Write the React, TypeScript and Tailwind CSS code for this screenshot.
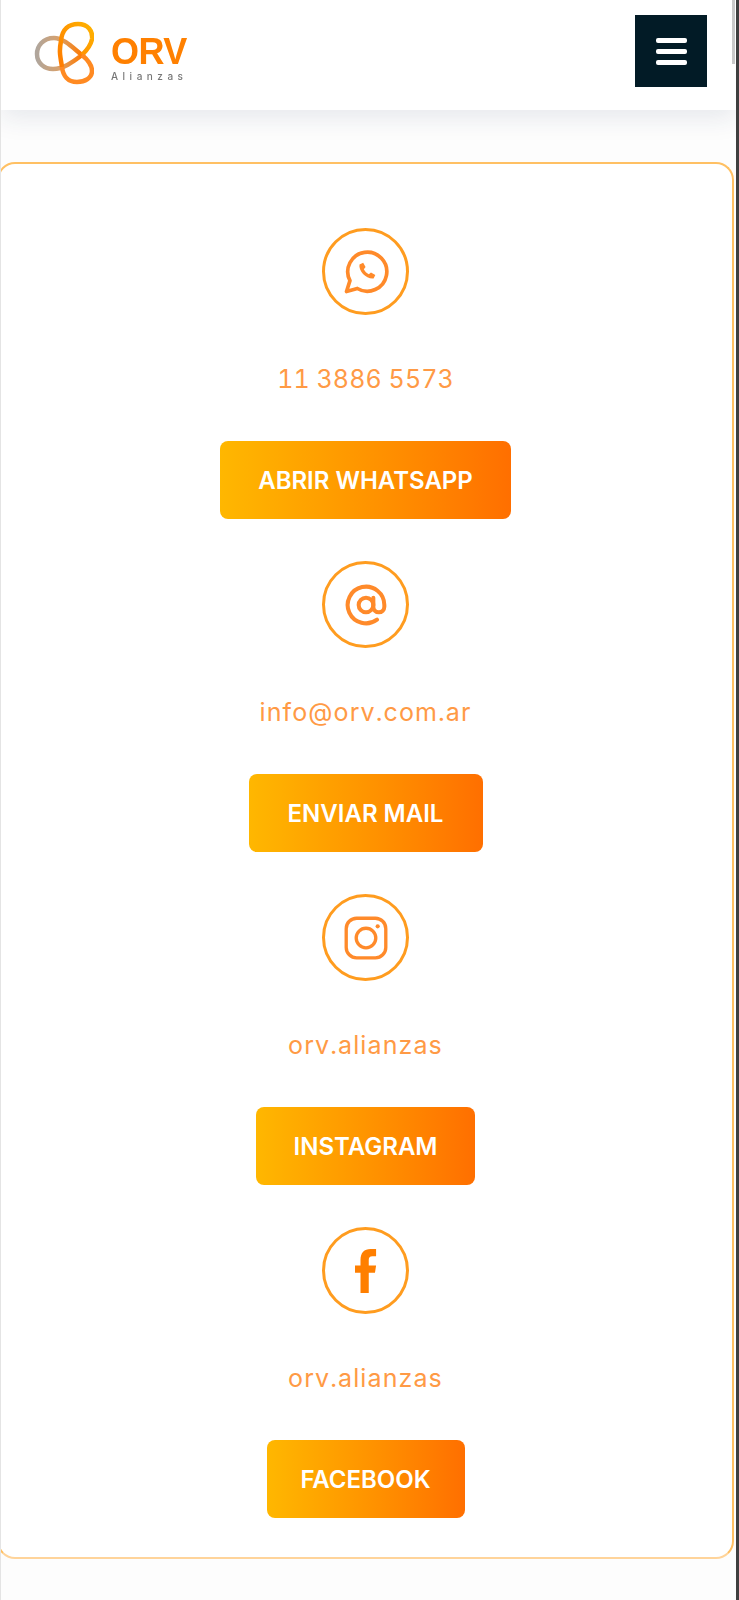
import type { ReactNode } from 'react'

function Logo() {
  return (
    <div className="mt-[6px] flex items-start gap-[17px]">
      <svg width="60" height="64" viewBox="0 0 60 64" fill="none" className="blur-[0.7px]">
        <defs>
          <linearGradient id="top" x1="0" y1="1" x2="1" y2="0">
            <stop offset="0" stopColor="#ff7a00" />
            <stop offset="1" stopColor="#ffb300" />
          </linearGradient>
          <linearGradient id="left" x1="0" y1="0" x2="1" y2="0">
            <stop offset="0" stopColor="#b0a69c" />
            <stop offset="0.5" stopColor="#d9a06a" />
            <stop offset="1" stopColor="#ff7a00" />
          </linearGradient>
        </defs>
        <path d="M48 34C40 28 30 17 20 17C9 17 3 25 3 33C3 42 10 48 19 48C30 48 40 40 48 34Z" stroke="url(#left)" strokeWidth="4.5" />
        <path d="M28 46C26 34 25 30 27 20C28 8 35 3 44 3C54 3 59 10 58 18C57 24 53 29 48 34" stroke="url(#top)" strokeWidth="4.5" />
        <path d="M48 34C54 39 58 44 58 50C58 57 51 61 43 61C34 61 29 55 28 46" stroke="#ff8a22" strokeWidth="4.5" />
      </svg>
      <div className="mt-[14px] flex flex-col items-start blur-[0.5px]">
        <span className="font-['Liberation_Sans',sans-serif] text-[36px] font-bold leading-[34px] tracking-[-0.5px] text-[#ff8000]">ORV</span>
        <span className="mt-[1px] text-[10px] font-medium leading-[12px] tracking-[4.5px] text-[#777]">Alianzas</span>
      </div>
    </div>
  )
}

function ContactBlock({ icon, label, action, width, tracking = 'tracking-[1.1px]' }: { icon: ReactNode; label: string; action: string; width: string; tracking?: string }) {
  return (
    <div className="flex h-[333px] flex-col items-center">
      <div className="flex h-[87px] w-[87px] items-center justify-center rounded-full border-[3px] border-[#ff9c1f] text-[#ff8a2a]">
        {icon}
      </div>
      <p className={`mt-[46px] text-[25px] leading-[36px] tabular-nums text-[#ff9a45] ${tracking}`}>{label}</p>
      <button className={`mt-[44px] h-[78px] rounded-lg bg-gradient-to-r from-[#ffb700] to-[#ff6f00] pt-[2px] text-[24px] font-semibold text-white ${width}`}>
        {action}
      </button>
    </div>
  )
}

export default function App() {
  return (
    <div className="relative h-[1600px] overflow-hidden border-l border-r-[3px] border-l-[#e4e4e4] border-r-[#3f3f3f] bg-[#fdfdfd] font-['Inter',sans-serif]">
      {/* scrollbar thumb */}
      <div className="absolute top-0 right-[1px] z-10 h-[64px] w-[3px] bg-[#c9c9c9]" />
      <header className="flex h-[110px] items-start justify-between bg-white pt-[15px] pl-[33px] pr-[29px] shadow-[0_8px_24px_rgba(30,50,90,0.1)]">
        <Logo />
        <button className="flex h-[72px] w-[72px] flex-col items-center justify-center gap-[6px] bg-[#021b26]">
          <span className="h-[5px] w-[31px] rounded-[2px] bg-white" />
          <span className="h-[5px] w-[31px] rounded-[2px] bg-white" />
          <span className="h-[5px] w-[31px] rounded-[2px] bg-white" />
        </button>
      </header>
      <main className="mt-[52px] -ml-[4px] h-[1397px] w-[737px] rounded-[18px] border-2 border-[#ffc063] border-b-[#ffd49a] bg-white pt-[64px]">
        <ContactBlock
          label="11 3886 5573"
          action="ABRIR WHATSAPP"
          width="w-[291px]"
          tracking="tracking-[0.1px]"
          icon={
            <svg width="52" height="52" viewBox="0 0 24 24" fill="none" stroke="currentColor" strokeWidth="1.7" strokeLinejoin="round" strokeLinecap="round">
              <path d="M3 21l1.6-5A9 9 0 1 1 8 19.6z" />
              <path d="M9 8.500c-.6 3 3.400 7 6.500 6.500l.8-1.600-2-1.200-1 .8c-1-.5-1.800-1.300-2.300-2.300l.8-1-1.100-2z" fill="currentColor" stroke="none" />
            </svg>
          }
        />
        <ContactBlock
          label="info@orv.com.ar"
          action="ENVIAR MAIL"
          width="w-[234px]"
          icon={
            <svg width="44" height="44" viewBox="0 0 24 24" fill="none" stroke="currentColor" strokeWidth="2.2" strokeLinecap="round">
              <circle cx="12" cy="12" r="4" />
              <path d="M16 8v5a3 3 0 0 0 6 0v-1a10 10 0 1 0-4 8" />
            </svg>
          }
        />
        <ContactBlock
          label="orv.alianzas"
          action="INSTAGRAM"
          width="w-[219px]"
          icon={
            <svg width="50" height="50" viewBox="0 0 24 24" fill="none" stroke="currentColor" strokeWidth="1.6">
              <rect x="2.500" y="2.500" width="19" height="19" rx="5" />
              <circle cx="12" cy="12" r="4.700" />
              <circle cx="17.600" cy="6.400" r="1" fill="currentColor" stroke="none" />
            </svg>
          }
        />
        <ContactBlock
          label="orv.alianzas"
          action="FACEBOOK"
          width="w-[198px]"
          icon={
            <svg width="22" height="44" viewBox="0 0 12 24" fill="#ff7f00">
              <path d="M3 24V13H0V9h3V6c0-4 2-6 5.500-6H11.500v4H9.500C8 4 7.500 4.800 7.500 6v3h4l-.6 4H7.500v11z" />
            </svg>
          }
        />
      </main>
    </div>
  )
}
